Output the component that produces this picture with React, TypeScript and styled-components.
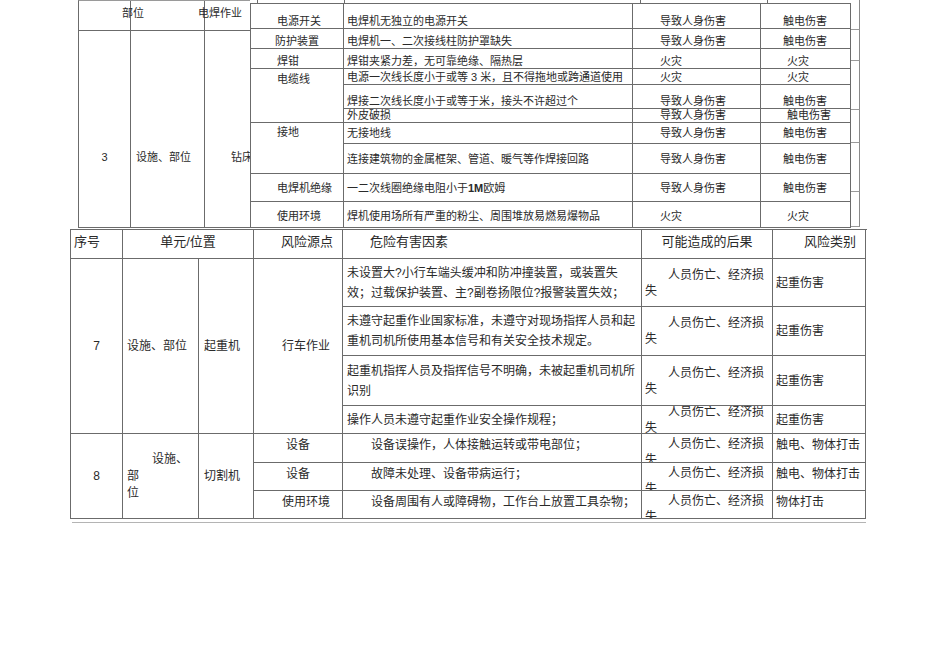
import React from 'react';
import styled, { createGlobalStyle } from 'styled-components';

const LINE = '#6b6b6b';

const GlobalStyle = createGlobalStyle`
  html, body {
    margin: 0;
    padding: 0;
    background: #ffffff;
  }
  body {
    font-family: "Liberation Sans", "Noto Sans CJK SC", sans-serif;
    color: #2a2a2a;
  }
`;

type VAlign = 'top' | 'mid' | 'bot';

const alignOf = (v?: VAlign) =>
  v === 'top' ? 'flex-start' : v === 'bot' ? 'flex-end' : 'center';

interface CellProps {
  $v?: VAlign;
  $pl?: number;
  $pr?: number;
  $pt?: number;
  $span?: number;
  $justify?: 'start' | 'center' | 'end';
  $clip?: boolean;
}

const Page = styled.div`
  width: 950px;
  height: 672px;
  overflow: hidden;
`;

/* ---------- top part: welding table laid over the drilling row ---------- */

const TopSection = styled.div`
  display: flex;
  align-items: flex-start;
  height: 229px;
  margin-left: 78px;
`;

const OuterGrid = styled.div`
  display: grid;
  grid-template-columns: 52px 74px 45px;
  grid-template-rows: 30px 197px;
  border-left: 1px solid ${LINE};
  border-top: 1px solid #9a9a9a;
  font-size: 11px;
  line-height: 14px;
`;

const OuterCell = styled.div<CellProps>`
  box-sizing: border-box;
  display: flex;
  align-items: ${(p) => alignOf(p.$v)};
  justify-content: ${(p) => (p.$justify === 'center' ? 'center' : 'flex-start')};
  padding: ${(p) => p.$pt ?? 0}px 0 0 ${(p) => p.$pl ?? 0}px;
  border-right: 1px solid ${LINE};
  border-bottom: 1px solid ${LINE};
  white-space: nowrap;
  overflow: ${(p) => (p.$clip ? 'hidden' : 'visible')};
  &:nth-child(3n) {
    border-right: none;
  }
`;

const InnerColumn = styled.div`
  display: flex;
  flex-direction: column;
`;

const TopStrip = styled.div`
  display: grid;
  grid-template-columns: 8px 87px 296px 127px 83px;
  height: 3px;
  border-bottom: 1px solid ${LINE};
`;

const StripTick = styled.div`
  border-right: 1px solid ${LINE};
`;

const InnerGrid = styled.div`
  display: grid;
  grid-template-columns: 93px 289px 128px 90px;
  grid-template-rows: 25px 20px 20px 16px 24px 14px 21px 30px 28px 26px;
  border-left: 1px solid ${LINE};
  font-size: 11px;
  line-height: 14px;
  background: #ffffff;
`;

const InnerCell = styled.div<CellProps>`
  box-sizing: border-box;
  display: flex;
  align-items: ${(p) => alignOf(p.$v)};
  padding: ${(p) => p.$pt ?? 0}px 0 0 ${(p) => p.$pl ?? 0}px;
  grid-row: ${(p) => (p.$span ? `span ${p.$span}` : 'auto')};
  border-right: 1px solid ${LINE};
  border-bottom: 1px solid ${LINE};
  white-space: nowrap;
  overflow: hidden;
`;

const EdgeStub = styled.div`
  display: flex;
  flex-direction: column;
  width: 9px;
`;

const StubBox = styled.div<{ $h: number }>`
  box-sizing: border-box;
  height: ${(p) => p.$h}px;
  border-right: 1px solid #8a8a8a;
  border-bottom: 1px solid #9a9a9a;
`;

const Num = styled.span`
  font-family: "Liberation Sans", Arial, sans-serif;
  margin: 0 3px;
`;

const BoldNum = styled.span`
  font-family: "Liberation Sans", Arial, sans-serif;
  font-weight: bold;
`;

/* ---------- bottom part: crane / cutting machine table ---------- */

const LowerGrid = styled.div`
  display: grid;
  grid-template-columns: 52px 76px 55px 89px 299px 131px 93px;
  grid-template-rows: 29px 48px 49px 50px 28px 29px 28px 28px;
  margin-left: 70px;
  width: 796px;
  border-left: 1px solid ${LINE};
  border-top: 1px solid ${LINE};
  font-size: 12px;
  line-height: 16px;
`;

const HeadCell = styled.div<CellProps>`
  box-sizing: border-box;
  display: flex;
  align-items: flex-start;
  justify-content: ${(p) =>
    p.$justify === 'center' ? 'center' : p.$justify === 'end' ? 'flex-end' : 'flex-start'};
  padding: 4px ${(p) => p.$pr ?? 0}px 0 ${(p) => p.$pl ?? 0}px;
  grid-column: ${(p) => (p.$span ? `span ${p.$span}` : 'auto')};
  border-right: 1px solid ${LINE};
  border-bottom: 1px solid ${LINE};
  font-size: 13px;
  white-space: nowrap;
`;

const BodyCell = styled.div<CellProps>`
  box-sizing: border-box;
  display: flex;
  align-items: ${(p) => alignOf(p.$v)};
  justify-content: ${(p) => (p.$justify === 'center' ? 'center' : 'flex-start')};
  padding: ${(p) => p.$pt ?? 0}px 0 0 ${(p) => p.$pl ?? 0}px;
  grid-row: ${(p) => (p.$span ? `span ${p.$span}` : 'auto')};
  border-right: 1px solid ${LINE};
  border-bottom: 1px solid ${LINE};
  white-space: nowrap;
  overflow: hidden;
`;

const FactorText = styled.div<{ $indent?: number; $lh?: number }>`
  text-indent: ${(p) => p.$indent ?? 0}px;
  line-height: ${(p) => p.$lh ?? 16}px;
`;

const Underline = styled.div`
  margin: 3px 0 0 72px;
  width: 794px;
  height: 1px;
  background: #b4b4b4;
`;

const Loss: React.FC = () => (
  <FactorText $indent={23}>
    人员伤亡、经济损
    <br />失
  </FactorText>
);

const App: React.FC = () => {
  return (
    <Page>
      <GlobalStyle />
      <TopSection>
        <OuterGrid>
          <OuterCell $v="top" $pt={5} $pl={43}>
            部位
          </OuterCell>
          <OuterCell $v="top" $pt={5} $pl={67}>
            电焊作业
          </OuterCell>
          <OuterCell />
          <OuterCell $v="top" $pt={119} $justify="center">
            <Num>3</Num>
          </OuterCell>
          <OuterCell $v="top" $pt={119} $pl={5}>
            设施、部位
          </OuterCell>
          <OuterCell $v="top" $pt={119} $pl={26} $clip>
            钻床
          </OuterCell>
        </OuterGrid>

        <InnerColumn>
          <TopStrip>
            <StripTick />
            <StripTick />
            <StripTick />
            <StripTick />
            <div />
          </TopStrip>
          <InnerGrid>
            <InnerCell $v="bot" $pl={26}>电源开关</InnerCell>
            <InnerCell $v="bot" $pl={3}>电焊机无独立的电源开关</InnerCell>
            <InnerCell $v="bot" $pl={27}>导致人身伤害</InnerCell>
            <InnerCell $v="bot" $pl={22}>触电伤害</InnerCell>

            <InnerCell $v="bot" $pl={24}>防护装置</InnerCell>
            <InnerCell $v="bot" $pl={3}>电焊机一、二次接线柱防护罩缺失</InnerCell>
            <InnerCell $v="bot" $pl={27}>导致人身伤害</InnerCell>
            <InnerCell $v="bot" $pl={22}>触电伤害</InnerCell>

            <InnerCell $v="bot" $pl={26}>焊钳</InnerCell>
            <InnerCell $v="bot" $pl={3}>焊钳夹紧力差，无可靠绝缘、隔热层</InnerCell>
            <InnerCell $v="bot" $pl={27}>火灾</InnerCell>
            <InnerCell $v="bot" $pl={26}>火灾</InnerCell>

            <InnerCell $v="top" $pt={3} $pl={26} $span={3}>
              电缆线
            </InnerCell>
            <InnerCell $v="bot" $pl={3}>
              电源一次线长度小于或等<Num>3</Num>米，且不得拖地或跨通道使用
            </InnerCell>
            <InnerCell $v="bot" $pl={27}>火灾</InnerCell>
            <InnerCell $v="bot" $pl={26}>火灾</InnerCell>

            <InnerCell $v="bot" $pl={3}>焊接二次线长度小于或等于米，接头不许超过个</InnerCell>
            <InnerCell $v="bot" $pl={27}>导致人身伤害</InnerCell>
            <InnerCell $v="bot" $pl={22}>触电伤害</InnerCell>

            <InnerCell $v="bot" $pl={3}>外皮破损</InnerCell>
            <InnerCell $v="bot" $pl={27}>导致人身伤害</InnerCell>
            <InnerCell $v="bot" $pl={26}>触电伤害</InnerCell>

            <InnerCell $v="top" $pt={2} $pl={26} $span={2}>
              接地
            </InnerCell>
            <InnerCell $pl={3}>无接地线</InnerCell>
            <InnerCell $pl={27}>导致人身伤害</InnerCell>
            <InnerCell $pl={22}>触电伤害</InnerCell>

            <InnerCell $pl={3}>连接建筑物的金属框架、管道、暖气等作焊接回路</InnerCell>
            <InnerCell $pl={27}>导致人身伤害</InnerCell>
            <InnerCell $pl={22}>触电伤害</InnerCell>

            <InnerCell $pl={26}>电焊机绝缘</InnerCell>
            <InnerCell $pl={3}>
              一二次线圈绝缘电阻小于 <BoldNum>1M</BoldNum> 欧姆
            </InnerCell>
            <InnerCell $pl={27}>导致人身伤害</InnerCell>
            <InnerCell $pl={22}>触电伤害</InnerCell>

            <InnerCell $pl={26} $pt={2}>使用环境</InnerCell>
            <InnerCell $pl={3} $pt={2}>焊机使用场所有严重的粉尘、周围堆放易燃易爆物品</InnerCell>
            <InnerCell $pl={27} $pt={2}>火灾</InnerCell>
            <InnerCell $pl={26} $pt={2}>火灾</InnerCell>
          </InnerGrid>
        </InnerColumn>

        <EdgeStub>
          <StubBox $h={30} />
          <StubBox $h={31} />
          <StubBox $h={49} />
          <StubBox $h={33} />
          <StubBox $h={49} />
          <StubBox $h={35} />
        </EdgeStub>
      </TopSection>

      <LowerGrid>
        <HeadCell $pl={3}>序号</HeadCell>
        <HeadCell $span={2} $justify="center">
          单元/位置
        </HeadCell>
        <HeadCell $justify="end" $pr={9}>
          风险源点
        </HeadCell>
        <HeadCell $pl={27}>危险有害因素</HeadCell>
        <HeadCell $justify="center">可能造成的后果</HeadCell>
        <HeadCell $justify="end" $pr={9}>
          风险类别
        </HeadCell>

        {/* 7 crane */}
        <BodyCell $span={4} $justify="center">
          7
        </BodyCell>
        <BodyCell $span={4} $pl={4}>
          设施、部位
        </BodyCell>
        <BodyCell $span={4} $pl={5}>
          起重机
        </BodyCell>
        <BodyCell $span={4} $justify="center" $pl={16}>
          行车作业
        </BodyCell>

        <BodyCell $pl={4}>
          <FactorText $lh={20}>
            未设置大?小行车端头缓冲和防冲撞装置，或装置失
            <br />
            效；过载保护装置、主?副卷扬限位?报警装置失效；
          </FactorText>
        </BodyCell>
        <BodyCell $pl={3}>
          <Loss />
        </BodyCell>
        <BodyCell $pl={3}>起重伤害</BodyCell>

        <BodyCell $pl={4}>
          <FactorText $lh={20}>
            未遵守起重作业国家标准，未遵守对现场指挥人员和起
            <br />
            重机司机所使用基本信号和有关安全技术规定。
          </FactorText>
        </BodyCell>
        <BodyCell $pl={3}>
          <Loss />
        </BodyCell>
        <BodyCell $pl={3}>起重伤害</BodyCell>

        <BodyCell $pl={4}>
          <FactorText $lh={20}>
            起重机指挥人员及指挥信号不明确，未被起重机司机所
            <br />
            识别
          </FactorText>
        </BodyCell>
        <BodyCell $pl={3}>
          <Loss />
        </BodyCell>
        <BodyCell $pl={3}>起重伤害</BodyCell>

        <BodyCell $pl={4}>操作人员未遵守起重作业安全操作规程；</BodyCell>
        <BodyCell $pl={3}>
          <Loss />
        </BodyCell>
        <BodyCell $pl={3}>起重伤害</BodyCell>

        {/* 8 cutting machine */}
        <BodyCell $span={3} $justify="center">
          8
        </BodyCell>
        <BodyCell $span={3} $pl={4}>
          <FactorText $indent={25} $lh={17}>
            设施、
            <br />部
            <br />位
          </FactorText>
        </BodyCell>
        <BodyCell $span={3} $pl={5}>
          切割机
        </BodyCell>

        <BodyCell $v="top" $pt={3} $justify="center">
          设备
        </BodyCell>
        <BodyCell $v="top" $pt={3} $pl={4}>
          <FactorText $indent={24}>设备误操作，人体接触运转或带电部位；</FactorText>
        </BodyCell>
        <BodyCell $v="top" $pt={2} $pl={3}>
          <Loss />
        </BodyCell>
        <BodyCell $v="top" $pt={3} $pl={3}>
          触电、物体打击
        </BodyCell>

        <BodyCell $v="top" $pt={3} $justify="center">
          设备
        </BodyCell>
        <BodyCell $v="top" $pt={3} $pl={4}>
          <FactorText $indent={24}>故障未处理、设备带病运行；</FactorText>
        </BodyCell>
        <BodyCell $v="top" $pt={2} $pl={3}>
          <Loss />
        </BodyCell>
        <BodyCell $v="top" $pt={3} $pl={3}>
          触电、物体打击
        </BodyCell>

        <BodyCell $v="top" $pt={3} $justify="center" $pl={16}>
          使用环境
        </BodyCell>
        <BodyCell $v="top" $pt={3} $pl={4}>
          <FactorText $indent={24}>设备周围有人或障碍物，工作台上放置工具杂物；</FactorText>
        </BodyCell>
        <BodyCell $v="top" $pt={2} $pl={3}>
          <Loss />
        </BodyCell>
        <BodyCell $v="top" $pt={3} $pl={3}>
          物体打击
        </BodyCell>
      </LowerGrid>
      <Underline />
    </Page>
  );
};

export default App;
